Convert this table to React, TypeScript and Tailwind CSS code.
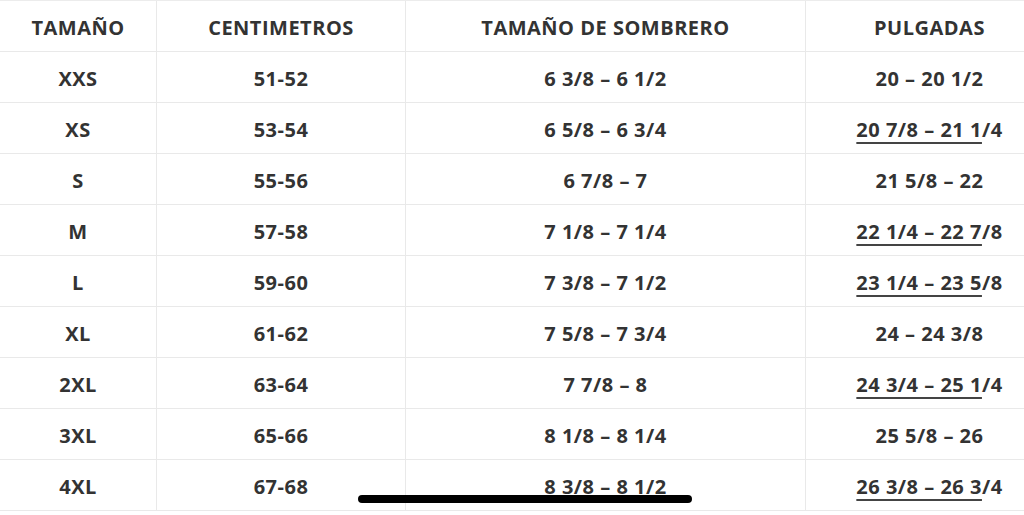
import React from "react";

type Row = {
  size: string;
  cm: string;
  hat: string;
  inch: string;
  mark?: [string, string];
};

const rows: Row[] = [
  { size: "XXS", cm: "51-52", hat: "6 3/8 – 6 1/2", inch: "20 – 20 1/2" },
  { size: "XS", cm: "53-54", hat: "6 5/8 – 6 3/4", inch: "", mark: ["20 7/8 – 21 1", "/4"] },
  { size: "S", cm: "55-56", hat: "6 7/8 – 7", inch: "21 5/8 – 22" },
  { size: "M", cm: "57-58", hat: "7 1/8 – 7 1/4", inch: "", mark: ["22 1/4 – 22 7", "/8"] },
  { size: "L", cm: "59-60", hat: "7 3/8 – 7 1/2", inch: "", mark: ["23 1/4 – 23 5", "/8"] },
  { size: "XL", cm: "61-62", hat: "7 5/8 – 7 3/4", inch: "24 – 24 3/8" },
  { size: "2XL", cm: "63-64", hat: "7 7/8 – 8", inch: "", mark: ["24 3/4 – 25 1", "/4"] },
  { size: "3XL", cm: "65-66", hat: "8 1/8 – 8 1/4", inch: "25 5/8 – 26" },
  { size: "4XL", cm: "67-68", hat: "8 3/8 – 8 1/2", inch: "", mark: ["26 3/8 – 26 3", "/4"] },
];

// table runs a bit past the right edge of the screen
const cols = "grid w-[1054px] grid-cols-[157px_249px_400px_248px]";
const cell = "flex h-[51px] items-center justify-center pt-[4px] border-r border-b border-[#e9e9e9]";

export default function App() {
  return (
    <div className="relative h-[515px] w-[1024px] overflow-hidden bg-white font-['Open_Sans',sans-serif] text-[20px] font-bold tracking-[0.5px] text-[#333]">
      <div className="w-[1054px] border-t border-[#ececec]">
        <div className={cols}>
          <div className={cell + " h-[50px]"}>TAMAÑO</div>
          <div className={cell + " h-[50px]"}>CENTIMETROS</div>
          <div className={cell + " h-[50px]"}>TAMAÑO DE SOMBRERO</div>
          <div className={cell + " h-[50px]"}>PULGADAS</div>
        </div>
        {rows.map((r) => (
          <div key={r.size} className={cols}>
            <div className={cell}>{r.size}</div>
            <div className={cell}>{r.cm}</div>
            <div className={cell}>{r.hat}</div>
            <div className={cell}>
              {r.mark ? (
                <span>
                  <span className="underline decoration-[#444] decoration-2 underline-offset-[5px]">{r.mark[0]}</span>
                  {r.mark[1]}
                </span>
              ) : (
                r.inch
              )}
            </div>
          </div>
        ))}
      </div>
      <div className="absolute left-[358px] top-[495px] h-[8px] w-[334px] rounded-full bg-black" />
    </div>
  );
}
